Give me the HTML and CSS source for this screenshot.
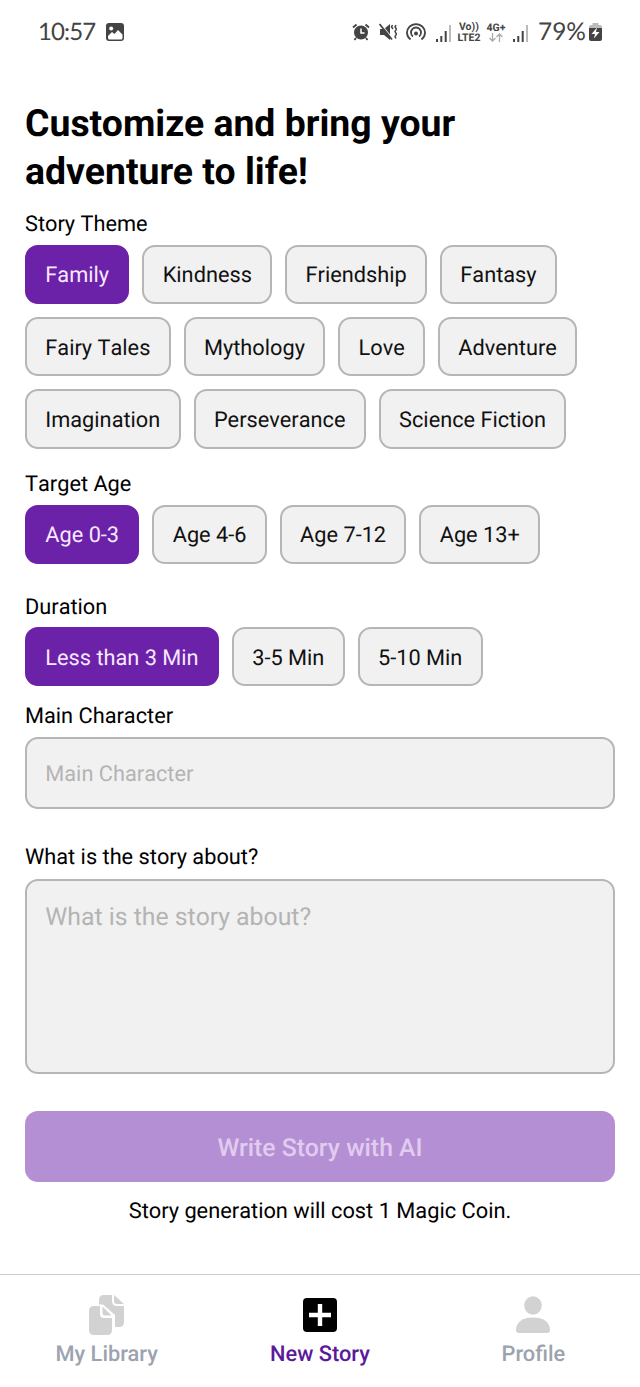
FILE: index.html
```
<!DOCTYPE html>
<html lang="en">
<head>
  <meta charset="UTF-8" />
  <meta name="viewport" content="width=device-width, initial-scale=1.0" />
  <title>New Story</title>
  <link rel="stylesheet" href="styles.css">
</head>
<body>
  <!-- status bar -->
  <header class="status-bar">
    <span class="clock">10:57</span>
    <svg class="icon-photo" width="20" height="20" viewBox="0 0 20 20">
      <rect x="1" y="1" width="18" height="18" rx="3" fill="#444"/>
      <path d="M3 14l4-4 2.500 2L13 8l4.500 4.500V16q0 1.500-1.500 1.500H4.500Q3 17.500 3 16z" fill="#fff"/>
      <circle cx="6.200" cy="6.500" r="2" fill="#fff"/>
    </svg>
    <div class="status-right">
      <svg class="icon-alarm" width="18" height="18" viewBox="0 0 18 18">
        <circle cx="9" cy="9.500" r="7" fill="#444"/>
        <path d="M1 4.500L4.500 1.500M17 4.500l-3.500-3M4 15l-1.500 2M14 15l1.500 2" stroke="#444" stroke-width="1.800" fill="none"/>
        <path d="M9 5.500V10h3.500" stroke="#fff" stroke-width="1.500" fill="none"/>
      </svg>
      <svg class="icon-mute" width="18" height="18" viewBox="0 0 18 18">
        <path d="M1 6h4l6-5v16l-6-5H1z" fill="#444"/>
        <path d="M2 1l12 15" stroke="#fff" stroke-width="1.200"/>
        <path d="M.5 1l12.500 15.500" stroke="#444" stroke-width="1.800"/>
        <path d="M13.500 2l-1 2 1.500 2M17 2l-1 2 1.500 2L16 8.500l1.500 2.500-1.500 2.500 1 2" stroke="#444" stroke-width="1.500" fill="none"/>
      </svg>
      <svg class="icon-hotspot" width="20" height="18" viewBox="0 0 20 18">
        <g fill="none" stroke="#444" stroke-width="1.800">
          <path d="M4.500 16.500a9 8.600 0 1 1 11 0"/>
          <path d="M7 13.500a5 5 0 1 1 6 0"/>
        </g>
        <circle cx="10" cy="10.500" r="2" fill="#444"/>
      </svg>
      <svg class="icon-signal" width="17" height="20" viewBox="0 0 17 20">
        <path d="M1 16h2v3H1zM5.300 13h2v6h-2zM9.700 8h2v11h-2z" fill="#444"/>
        <path d="M14 2h2v17h-2z" fill="#bbb"/>
      </svg>
      <div class="net net-volte"><span>Vo))</span><span>LTE2</span></div>
      <div class="net net-4g">
        <span>4G+</span>
        <svg width="16" height="9" viewBox="0 0 16 9">
          <path d="M4.500 0v8M1.500 5l3 3 3-3M11.500 9V1M8.500 4l3-3 3 3" fill="none" stroke="#aaa" stroke-width="1.300"/>
        </svg>
      </div>
      <svg class="icon-signal" width="17" height="20" viewBox="0 0 17 20">
        <path d="M1 16h2v3H1zM5.300 13h2v6h-2zM9.700 8h2v11h-2z" fill="#444"/>
        <path d="M14 2h2v17h-2z" fill="#bbb"/>
      </svg>
      <span class="battery-text">79%</span>
      <svg class="icon-battery" width="13" height="18" viewBox="0 0 13 18">
        <path d="M3.500 0h6v2H11q2 0 2 2v2H0V4q0-2 2-2h1.500z" fill="#bbb"/>
        <path d="M0 5h13v11q0 2-2 2H2q-2 0-2-2z" fill="#444"/>
        <path d="M8 4.500L2.500 11H6l-1 4.500L10.500 9H7z" fill="#fff"/>
      </svg>
    </div>
  </header>

  <main class="content">
    <h1>Customize and bring your adventure to life!</h1>

    <h2 class="label">Story Theme</h2>
    <div class="chips">
      <button class="chip active">Family</button>
      <button class="chip">Kindness</button>
      <button class="chip">Friendship</button>
      <button class="chip">Fantasy</button>
      <button class="chip">Fairy Tales</button>
      <button class="chip">Mythology</button>
      <button class="chip">Love</button>
      <button class="chip">Adventure</button>
      <button class="chip">Imagination</button>
      <button class="chip">Perseverance</button>
      <button class="chip">Science Fiction</button>
    </div>

    <h2 class="label label-age">Target Age</h2>
    <div class="chips">
      <button class="chip active">Age 0-3</button>
      <button class="chip">Age 4-6</button>
      <button class="chip">Age 7-12</button>
      <button class="chip">Age 13+</button>
    </div>

    <h2 class="label label-duration">Duration</h2>
    <div class="chips">
      <button class="chip active">Less than 3 Min</button>
      <button class="chip">3-5 Min</button>
      <button class="chip">5-10 Min</button>
    </div>

    <label class="label label-character" for="character">Main Character</label>
    <input class="field" id="character" type="text" placeholder="Main Character">

    <label class="label label-about" for="about">What is the story about?</label>
    <textarea class="field field-about" id="about" placeholder="What is the story about?"></textarea>

    <button class="submit" disabled>Write Story with AI</button>
    <p class="cost">Story generation will cost 1 Magic Coin.</p>
  </main>

  <!-- bottom tabs -->
  <nav class="tabs">
    <a class="tab">
      <svg width="40" height="42" viewBox="0 0 40 42" fill="#d2d2d2">
        <path d="M17 1h8v6q0 5 5 5h7v16q0 5-5 5h-4V21L16 10.500h-4V6q0-5 5-5z"/>
        <path d="M27 1l10 9h-7q-3 0-3-3z"/>
        <path d="M7 12h6v8q0 4 4 4h8v12q0 5-5 5H7q-5 0-5-5V17q0-5 5-5z"/>
        <path d="M15.500 12.500l9 9H18q-2.500 0-2.500-2.500z"/>
      </svg>
      <span>My Library</span>
    </a>
    <a class="tab active">
      <svg width="40" height="42" viewBox="0 0 40 42">
        <rect x="3" y="4" width="34" height="34" rx="4" fill="#000"/>
        <path d="M20 10v22M9 21h22" stroke="#fff" stroke-width="4.400"/>
      </svg>
      <span>New Story</span>
    </a>
    <a class="tab">
      <svg width="40" height="42" viewBox="0 0 40 42" fill="#d2d2d2">
        <ellipse cx="20" cy="11.500" rx="8.800" ry="9.200"/>
        <path d="M3 36c0-8 7-12.500 17-12.500S37 28 37 36q0 3-3 3H6q-3 0-3-3z"/>
      </svg>
      <span>Profile</span>
    </a>
  </nav>
</body>
</html>
```
FILE: styles.css
```
* {
  margin: 0;
  padding: 0;
  box-sizing: border-box;
}

body {
  width: 640px;
  height: 1387px;
  display: flex;
  flex-direction: column;
  overflow: hidden;
  background-color: #fff;
  color: #000;
  font-family: Roboto, "Liberation Sans", sans-serif;
  text-rendering: geometricPrecision;
}

/* status bar */
.status-bar {
  display: flex;
  align-items: center;
  height: 64px;
  padding: 0 38px;
  color: #444;
}
.clock {
  width: 67px;
  padding-bottom: 1px;
  font-family: Lato, sans-serif;
  font-size: 24px;
  letter-spacing: -0.9px;
}
.status-right {
  display: flex;
  align-items: center;
  margin-left: auto;
}
.icon-alarm,
.icon-mute,
.icon-hotspot {
  margin-right: 9px;
}
.icon-signal {
  margin-top: 1px;
}
.net {
  display: flex;
  flex-direction: column;
  align-items: center;
  font-size: 10.5px;
  font-weight: 700;
  line-height: 10px;
}
.net-volte {
  width: 26px;
  margin: 0 4px;
  gap: 1px;
}
.net-4g {
  width: 20px;
  margin-right: 6px;
}
.battery-text {
  margin: 0 3px 0 9px;
  padding-bottom: 1px;
  font-family: Lato, sans-serif;
  font-size: 24.5px;
}

/* form */
.content {
  flex: 1;
  padding: 36px 25px 0;
  font-kerning: none;
}
h1 {
  width: 460px;
  font-size: 37.4px;
  font-weight: 700;
  font-kerning: normal;
  line-height: 48px;
}
.label {
  display: block;
  margin-top: 12px;
  font-size: 21.75px;
  font-weight: 400;
  line-height: 33px;
}
.chips {
  display: flex;
  flex-wrap: wrap;
  gap: 13px;
  margin-top: 3.5px;
}
.chip {
  height: 59.4px;
  padding: 3px 18.3px 0;
  border: 2px solid #b6b6b6;
  border-radius: 13px;
  background-color: #f1f1f1;
  color: #111;
  font-family: inherit;
  font-size: 21.75px;
  font-kerning: inherit;
  text-rendering: inherit;
}
.chip.active {
  border-color: #6b21a8;
  background-color: #6b21a8;
  color: #f8e8ff;
}
.label-age {
  margin-top: 19.5px;
}
.label-duration {
  margin-top: 26.5px;
}
.label-character {
  margin-top: 13.5px;
}
.field {
  display: block;
  width: 100%;
  height: 72px;
  margin-top: 4.5px;
  padding: 3px 18.3px 0;
  border: 2px solid #b6b6b6;
  border-radius: 13px;
  background-color: #f1f1f1;
  font-family: inherit;
  font-size: 21.75px;
  font-kerning: inherit;
  text-rendering: inherit;
  resize: none;
}
.field::placeholder {
  color: #b4b4b4;
}
.label-about {
  margin-top: 32px;
}
.field-about {
  height: 195px;
  padding-top: 22px;
  font-size: 24.8px;
}
.submit {
  display: block;
  width: 100%;
  height: 71px;
  margin-top: 37.5px;
  padding-top: 3px;
  border: none;
  border-radius: 13px;
  background-color: #b58fd4;
  color: #e1cbef;
  font-family: inherit;
  font-size: 24.8px;
  font-weight: 500;
  text-rendering: inherit;
}
.cost {
  margin-top: 14px;
  font-size: 21.8px;
  line-height: 32px;
  text-align: center;
}

/* bottom tabs */
.tabs {
  display: flex;
  height: 113px;
  border-top: 1px solid #ccc;
}
.tab {
  flex: 1;
  display: flex;
  flex-direction: column;
  align-items: center;
  padding-top: 19px;
  color: #9ca3af;
  font-size: 21.8px;
  font-weight: 500;
  line-height: 38px;
}
.tab.active {
  color: #5b1a9a;
}
```
